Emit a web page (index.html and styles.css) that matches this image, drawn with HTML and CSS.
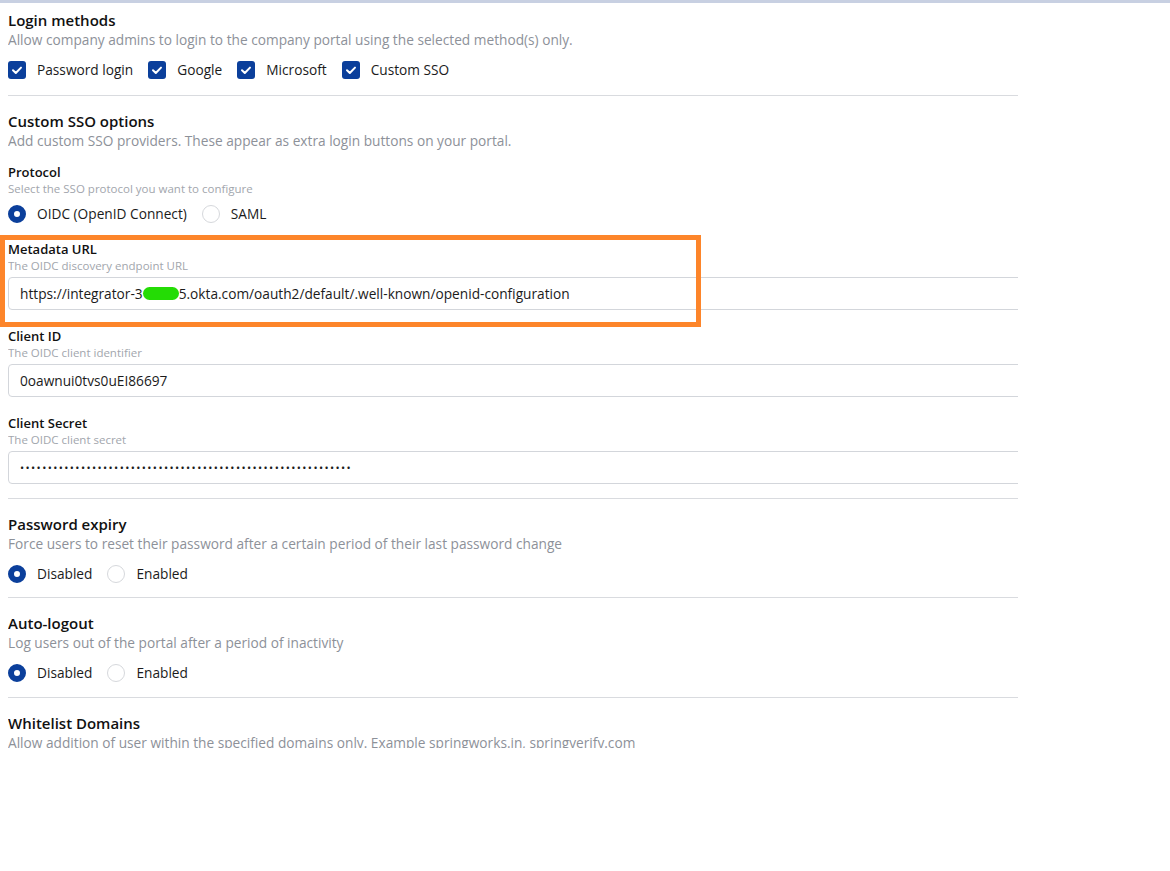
FILE: index.html
```html
<!DOCTYPE html>
<html lang="en">
<head>
    <meta charset="UTF-8">
    <meta name="viewport" content="width=device-width, initial-scale=1.0">
    <title>Security settings</title>
    <link rel="stylesheet" href="styles.css">
</head>
<body>
    <div class="top-bar"></div>

    <div class="panel">
        <!-- Login methods -->
        <section class="setting first">
            <h2>Login methods</h2>
            <p class="desc">Allow company admins to login to the company portal using the selected method(s) only.</p>
            <div class="option-row">
                <label class="option">
                    <span class="checkbox"><svg viewBox="0 0 18 18"><path d="M5 9.3l2.8 2.7L13 6.6"/></svg></span>
                    Password login
                </label>
                <label class="option">
                    <span class="checkbox"><svg viewBox="0 0 18 18"><path d="M5 9.3l2.8 2.7L13 6.6"/></svg></span>
                    Google
                </label>
                <label class="option">
                    <span class="checkbox"><svg viewBox="0 0 18 18"><path d="M5 9.3l2.8 2.7L13 6.6"/></svg></span>
                    Microsoft
                </label>
                <label class="option">
                    <span class="checkbox"><svg viewBox="0 0 18 18"><path d="M5 9.3l2.8 2.7L13 6.6"/></svg></span>
                    Custom SSO
                </label>
            </div>
        </section>

        <!-- Custom SSO -->
        <section class="setting tight">
            <h2 class="strong">Custom SSO options</h2>
            <p class="desc">Add custom SSO providers. These appear as extra login buttons on your portal.</p>

            <div class="field first-field">
                <div class="field-label">Protocol</div>
                <div class="field-hint">Select the SSO protocol you want to configure</div>
                <div class="option-row radios">
                    <label class="option"><span class="radio checked"></span>OIDC (OpenID Connect)</label>
                    <label class="option"><span class="radio"></span>SAML</label>
                </div>
            </div>

            <div class="field">
                <div class="field-label">Metadata URL</div>
                <div class="field-hint">The OIDC discovery endpoint URL</div>
                <div class="field-input">https://integrator-3<span class="redact"></span>5.okta.com/oauth2/default/.well-known/openid-configuration</div>
            </div>

            <div class="field">
                <div class="field-label">Client ID</div>
                <div class="field-hint">The OIDC client identifier</div>
                <div class="field-input">0oawnui0tvs0uEI86697</div>
            </div>

            <div class="field">
                <div class="field-label">Client Secret</div>
                <div class="field-hint">The OIDC client secret</div>
                <div class="field-input"><span class="secret">••••••••••••••••••••••••••••••••••••••••••••••••••••••••••••</span></div>
            </div>
        </section>

        <!-- Password expiry -->
        <section class="setting tight">
            <h2>Password expiry</h2>
            <p class="desc">Force users to reset their password after a certain period of their last password change</p>
            <div class="option-row radios">
                <label class="option"><span class="radio checked"></span>Disabled</label>
                <label class="option"><span class="radio"></span>Enabled</label>
            </div>
        </section>

        <!-- Auto-logout -->
        <section class="setting">
            <h2>Auto-logout</h2>
            <p class="desc">Log users out of the portal after a period of inactivity</p>
            <div class="option-row radios">
                <label class="option"><span class="radio checked"></span>Disabled</label>
                <label class="option"><span class="radio"></span>Enabled</label>
            </div>
        </section>

        <!-- Whitelist -->
        <section class="setting">
            <h2>Whitelist Domains</h2>
            <p class="desc">Allow addition of user within the specified domains only. Example springworks.in, springverify.com</p>
        </section>
    </div>

    <!-- annotation box -->
    <div class="highlight"></div>
</body>
</html>
```

FILE: styles.css
```css
body {
    margin: 0;
    font-family: 'Open Sans', Arial, sans-serif;
    color: #1b1b1b;
    background: #fff;
}

.top-bar {
    height: 3px;
    background: #c8d0e2;
}

.panel {
    width: 1010px;
    height: 745px;
    margin-left: 8px;
    overflow: hidden;
}

.setting {
    padding: 15px 0;
    border-bottom: 1px solid #d9dbdf;
}

.setting.first {
    padding-top: 7px;
    padding-bottom: 16px;
}

.setting.tight {
    padding-bottom: 14px;
}

h2 {
    margin: 0;
    font-size: 15px;
    line-height: 21px;
    font-weight: 600;
    color: #111;
}

.desc {
    margin: 0;
    font-size: 13.7px;
    line-height: 18px;
    color: #8d9199;
}

.option-row {
    display: flex;
    gap: 15px;
    margin-top: 12px;
}

.option {
    display: flex;
    align-items: center;
    gap: 11px;
    font-size: 13.7px;
    line-height: 18px;
    color: #1b1b1b;
}

.checkbox {
    width: 18px;
    height: 18px;
    border-radius: 3px;
    background: #0b3f9b;
    display: flex;
}

.checkbox svg {
    width: 18px;
    height: 18px;
    fill: none;
    stroke: #fff;
    stroke-width: 2;
    stroke-linecap: round;
    stroke-linejoin: round;
}

.radio {
    width: 18px;
    height: 18px;
    box-sizing: border-box;
    border-radius: 50%;
    border: 1px solid #d6d8dc;
    background: #fff;
}

.radio.checked {
    border: 6px solid #0b3f9b;
}

.field {
    margin-top: 17px;
}

.field.first-field {
    margin-top: 13px;
}

.field .option-row.radios {
    margin-top: 9px;
}

.field-label {
    font-size: 13px;
    line-height: 18px;
    font-weight: 600;
    color: #111;
}

.field-hint {
    font-size: 11.5px;
    line-height: 15px;
    color: #a2a6ad;
}

.field-input {
    margin-top: 4px;
    width: calc(100% + 12px);
    height: 33px;
    box-sizing: border-box;
    border: 1px solid #d3d6db;
    border-radius: 4px;
    padding: 0 11px;
    display: flex;
    align-items: center;
    font-size: 13.7px;
    color: #1b1b1b;
    white-space: nowrap;
}

.secret {
    font-size: 11px;
    letter-spacing: 1.4px;
}

.redact {
    display: inline-block;
    width: 36px;
    height: 13px;
    border-radius: 7px;
    background: #24dc05;
}

.highlight {
    position: absolute;
    left: 0;
    top: 235px;
    width: 701px;
    height: 92px;
    box-sizing: border-box;
    border: 5px solid #fd852a;
}
```
